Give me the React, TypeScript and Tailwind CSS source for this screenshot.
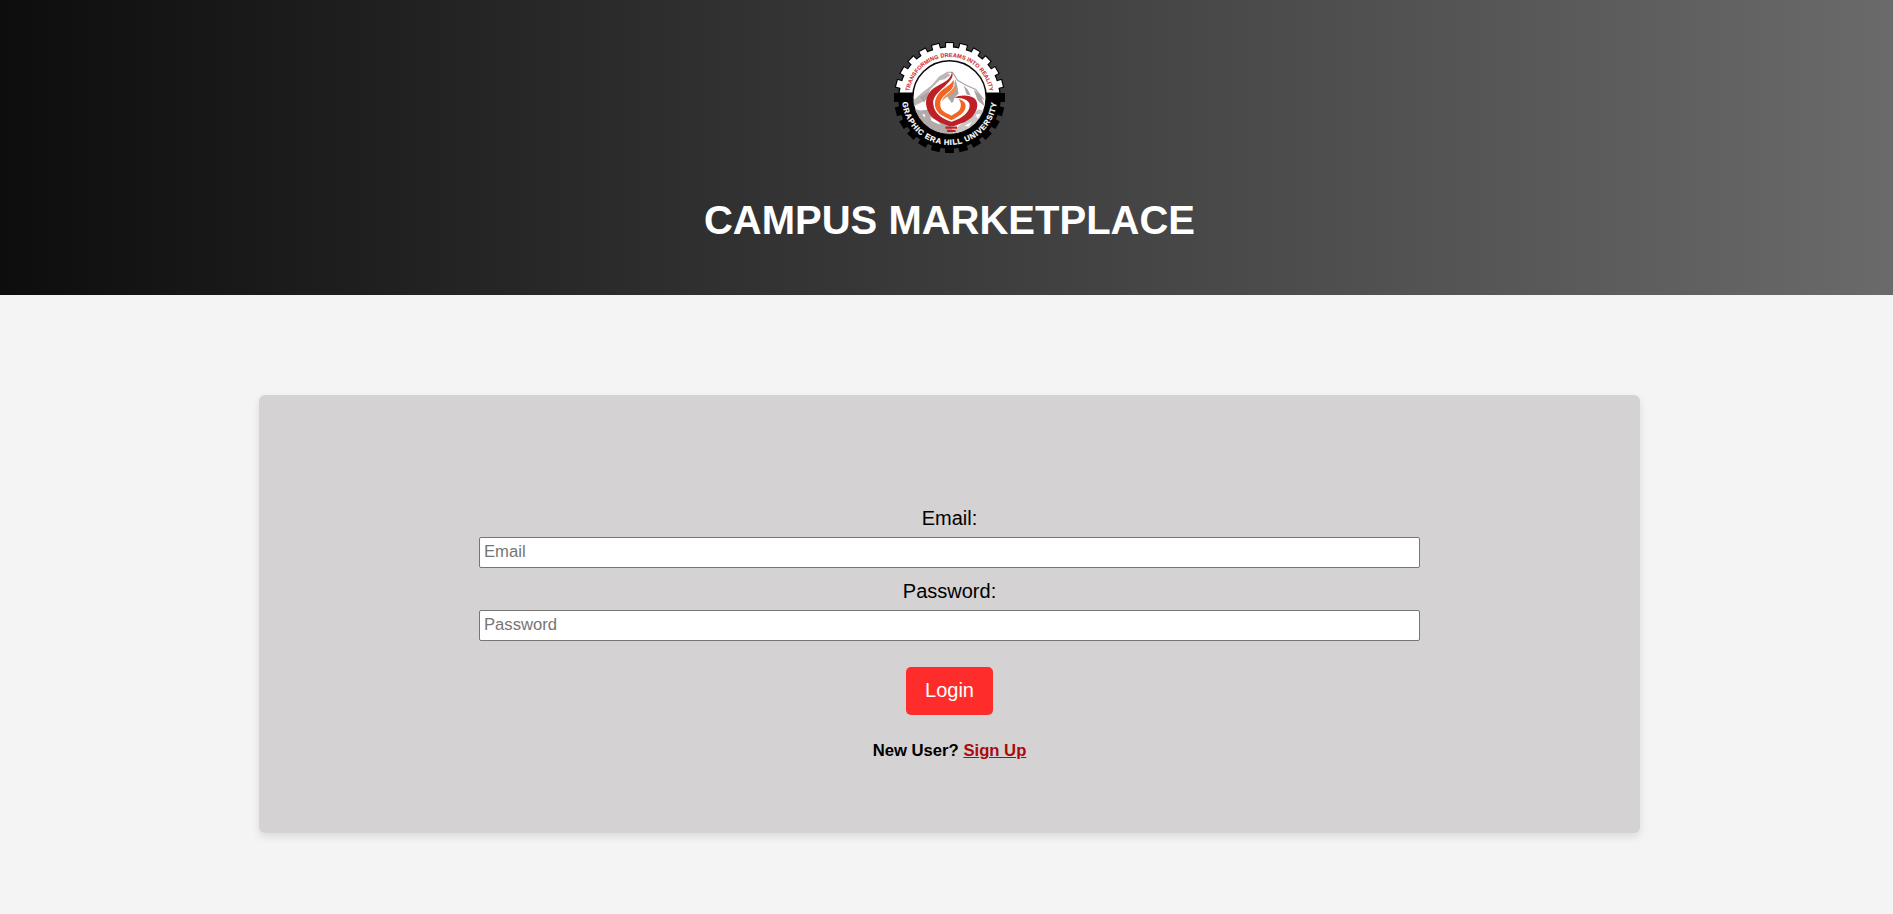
const TEETH = Array.from({ length: 24 }, (_, i) => i * 15);

function Crest() {
  return (
    <svg viewBox="-55 -55 110 110" className="block h-[111px] w-[111px]">
      <defs>
        <clipPath id="upper"><rect x="-56" y="-56" width="112" height="51" /></clipPath>
        <clipPath id="inner"><circle r="36" /></clipPath>
        <path id="topArc" d="M-40.2 0A40.2 40.2 0 0 1 40.2 0" />
        <path id="lowArc" d="M-47 0A47 47 0 0 0 47 0" />
      </defs>
      <g fill="#000">
        <circle r="50.8" />
        {TEETH.map((a) => (
          <rect key={a} x="-4.4" y="-55" width="8.8" height="8" transform={`rotate(${a})`} />
        ))}
      </g>
      <g fill="#fff" clipPath="url(#upper)">
        <circle r="49.6" />
        {TEETH.map((a) => (
          <rect key={a} x="-3.4" y="-53.9" width="6.8" height="8" transform={`rotate(${a})`} />
        ))}
      </g>
      <circle r="36.4" fill="#fff" stroke="#0a0a0a" strokeWidth="1.5" />
      <g clipPath="url(#inner)">
        <path d="M-3 -25L-10 -21L-18 -12L-27 -5L-36 3V9L-28 5L-23 2L-19 -8L-10 -17L-5 -18L1 -22Z" fill="#bdb6b5" />
        <path d="M-3 -25L3 -25L8 -17L17 -12L26 -8L34 2" fill="none" stroke="#aaa3a2" strokeWidth="1.1" />
        <path d="M6 -18L8 -10L9 -4L5 0L3 7L0 2L-4 3L-1 -5L4 -11ZM14 -12L17 -3L21 -2L18 -8ZM24 -8L31 -2L35 9L28 3ZM-20 -6L-30 0L-25 5Z" fill="#aba4a3" />
        <path d="M-36 11L-29 13L-21 12L-15 20L-5 25L2 29L4 37H-30L-38 22Z" fill="#b1aaa9" />
        <path d="M14 24L22 19L28 12L37 13L33 24L20 34L3 37L6 31Z" fill="#cbc5c4" />
        <path d="M-19 19L-16 21L-12 22L-9 27L-14 25L-18 23ZM-27 16L-24 17L-25 20ZM15 28L22 24L19 29ZM26 17L31 16L28 21Z" fill="#fff" />
      </g>
      <path d="M2.300 -25.7C5 -20 0 -16 -5 -11C-14 -3 -17 1 -16 7C-15 16 -8 21 2 24C13 21 20 14 20 8C20 3 14 0 4.700 .3C10 -3 20 -3 25 1C29 5 28 12 24 17C19 24 12 25 4 28.500H0C-8 25 -15 23 -20 16C-25 7 -24 0 -19 -6C-13 -13 2 -15 2.300 -25.7Z" fill="#bd2026" />
      <path d="M-9 4C-13 14 -5 16 2 21C11 16 16 11 8 2L1 6L-2 -1Z" fill="#fff" />
      <path d="M4 -17.500C1 -11 -8 -9 -12 -2C-16 5 -15 11 -10 16C-6 19 -2 20 2 22.500C6 20 11 18 14 14C18 9 16 3 9 1.500C12 5 12 10 9 13.500C7 15.500 4 16.500 2 18C-1 16.500 -4 16 -7 13C-10 9 -10 4 -6 -1C-2 -5 6 -8 4 -17.500Z" fill="#f26522" />
      <path d="M4.600 -13C5 -7 -7 -3 -9 5" fill="none" stroke="#fff" strokeWidth=".8" />
      <path d="M5.500 -12C9 -3 -4 -3 -7 4C-8 -2 3 -5 5.500 -12Z" fill="#f58a4b" />
      <path d="M-4 29.800H7.500M-2.500 33H6" stroke="#bd2026" strokeWidth="2.200" />
      <g fontFamily="Liberation Sans, sans-serif" fontWeight="700" textAnchor="middle">
        <text fontSize="5.6" fill="#cf3039" stroke="#cf3039" strokeWidth=".1" letterSpacing=".06">
          <textPath href="#topArc" startOffset="50%">TRANSFORMING DREAMS INTO REALITY</textPath>
        </text>
        <text fontSize="7.6" fill="#fff" stroke="#fff" strokeWidth=".2" letterSpacing=".68">
          <textPath href="#lowArc" startOffset="50%">GRAPHIC ERA HILL UNIVERSITY</textPath>
        </text>
      </g>
    </svg>
  );
}

function Field({ label, type }: { label: string; type: string }) {
  return (
    <label className="flex w-full flex-col items-center">
      <span className="text-xl leading-[23px]">{label}:</span>
      <input
        type={type}
        placeholder={label}
        className="mt-[7px] h-[31.4px] w-full rounded-[2px] border border-[#767676] bg-white px-1 pb-px text-[16.67px] placeholder:text-[#757575]"
      />
    </label>
  );
}

export default function App() {
  return (
    <div className="min-h-screen bg-[#f4f4f4] font-['Liberation_Sans',Arial,sans-serif] text-black">
      <header className="flex h-[295px] flex-col items-center bg-[linear-gradient(90deg,#0d0d0d,#6a6a6a)] pt-[41.5px] pl-[6px]">
        <Crest />
        <h1 className="mt-[44px] text-[40px] leading-[46px] font-bold text-white">CAMPUS MARKETPLACE</h1>
      </header>
      <main className="flex justify-center pt-[100px] pl-[6px]">
        <form className="flex h-[438px] w-[1381px] flex-col items-center rounded-md bg-[#d4d2d3] px-[220px] pt-[112px] shadow-[0_4px_8px_rgba(0,0,0,0.1)]">
          <div className="flex w-full flex-col gap-[11.6px]">
            <Field label="Email" type="email" />
            <Field label="Password" type="password" />
          </div>
          <button type="button" className="mt-[25.6px] h-12 w-[87px] rounded-[5px] bg-[#ff2c2c] pb-0.5 text-xl text-white">
            Login
          </button>
          <p className="mt-[26.5px] text-[16.67px] leading-[19px] font-bold">
            New User? <a href="#" className="text-[#a90b0e] underline">Sign Up</a>
          </p>
        </form>
      </main>
    </div>
  );
}
